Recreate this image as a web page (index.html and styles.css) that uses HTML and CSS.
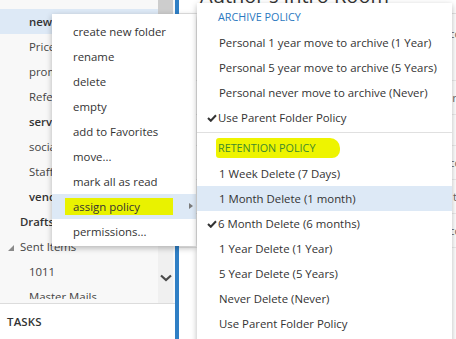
FILE: index.html
```html
<!DOCTYPE html>
<html lang="en">
<head>
    <meta charset="UTF-8">
    <meta name="viewport" content="width=device-width, initial-scale=1.0">
    <title>Mail - Folders</title>
    <link rel="stylesheet" href="styles.css">
</head>
<body>
  <div class="app">
    <aside class="sidebar">
      <div class="folders">
        <ul class="folder-list">
          <li class="folder sub strong selected">newsletters</li>
          <li class="folder sub">Price lists</li>
          <li class="folder sub">promotions</li>
          <li class="folder sub">References</li>
          <li class="folder sub strong">services</li>
          <li class="folder sub">social</li>
          <li class="folder sub">Staff</li>
          <li class="folder sub strong">vendors</li>
          <li class="folder strong">Drafts</li>
          <li class="folder">
            <svg class="twisty" width="6" height="6" viewBox="0 0 6 6"><polygon points="6,0 6,6 0,6" /></svg>
            Sent Items
          </li>
          <li class="folder sub">1011</li>
          <li class="folder sub">Master Mails</li>
        </ul>
        <div class="scrollbar">
          <div class="thumb"></div>
          <svg class="chevron" width="12" height="8" viewBox="0 0 12 8">
            <polyline points="1,1.5 6,6 11,1.5" />
          </svg>
        </div>
      </div>
      <div class="tasks">TASKS</div>
    </aside>

    <div class="splitter"></div>

    <main class="content">
      <h1 class="reading-title">Author's Intro Room</h1>
      <div class="message-row tall">cc</div>
      <div class="message-row">r:</div>
      <div class="message-row short"></div>
      <div class="message-row">cc</div>
      <div class="message-row">t:</div>
      <div class="message-row">cc</div>
    </main>
  </div>

  <!-- folder context menu -->
  <ul class="menu folder-menu">
    <li>create new folder</li>
    <li>rename</li>
    <li>delete</li>
    <li>empty</li>
    <li>add to Favorites</li>
    <li>move...</li>
    <li>mark all as read</li>
    <li class="active has-sub"><span class="marker">assign policy</span></li>
    <li>permissions...</li>
  </ul>

  <!-- policy submenu -->
  <div class="menu policy-menu">
    <div class="policy-title">ARCHIVE POLICY</div>
    <div class="policy-item">Personal 1 year move to archive (1 Year)</div>
    <div class="policy-item">Personal 5 year move to archive (5 Years)</div>
    <div class="policy-item">Personal never move to archive (Never)</div>
    <div class="policy-item checked">
      <svg class="check" width="10" height="8" viewBox="0 0 10 8"><polyline points="1,4 3.8,6.8 9,1.2" /></svg>
      Use Parent Folder Policy
    </div>
    <div class="policy-sep"></div>
    <div class="policy-title retention"><span class="marker">RETENTION POLICY</span></div>
    <div class="policy-item">1 Week Delete (7 Days)</div>
    <div class="policy-item active">1 Month Delete (1 month)</div>
    <div class="policy-item checked">
      <svg class="check" width="10" height="8" viewBox="0 0 10 8"><polyline points="1,4 3.8,6.8 9,1.2" /></svg>
      6 Month Delete (6 months)
    </div>
    <div class="policy-item">1 Year Delete (1 Year)</div>
    <div class="policy-item">5 Year Delete (5 Years)</div>
    <div class="policy-item">Never Delete (Never)</div>
    <div class="policy-item">Use Parent Folder Policy</div>
  </div>
</body>
</html>
```

FILE: styles.css
```css
html, body {
    margin: 0;
    padding: 0;
    background-color: #ffffff;
    font-family: 'Open Sans', 'Noto Sans', sans-serif;
    font-size: 11.4px;
    color: #444444;
}

body {
    width: 456px;
    height: 339px;
    overflow: hidden;
    position: relative;
}

ul {
    list-style: none;
    margin: 0;
    padding: 0;
}

.app {
    display: flex;
    height: 339px;
}

/* Folder pane */
.sidebar {
    width: 175px;
    display: flex;
    flex-direction: column;
    background-color: #ffffff;
}

.folders {
    display: flex;
    height: 303px;
    border-bottom: 1px solid #dcdcdc;
    background-color: #f8f8f8;
}

.folder-list {
    width: 158px;
    height: 299px;
    padding-top: 9px;
    box-sizing: border-box;
    overflow: hidden;
}

.folder {
    height: 25px;
    line-height: 25px;
    padding-left: 20px;
    white-space: nowrap;
    display: flex;
    align-items: center;
}

.folder.sub {
    padding-left: 29px;
}

.folder.strong {
    font-weight: 600;
    color: #333333;
}

.folder.selected {
    background-color: #dde9f6;
}

.twisty {
    fill: #8a8a8a;
    margin-left: -12px;
    margin-right: 6px;
    margin-top: 2px;
}

.scrollbar {
    width: 15px;
    display: flex;
    flex-direction: column;
    align-items: center;
    background-color: #f0f0f0;
}

.thumb {
    width: 15px;
    height: 14px;
    background-color: #cdcdcd;
}

.chevron {
    margin-top: auto;
    margin-bottom: 21px;
    fill: none;
    stroke: #4a4a4a;
    stroke-width: 2.2;
}

.tasks {
    padding: 10px 7px;
    font-weight: 600;
    color: #333333;
    letter-spacing: 0.2px;
}

.splitter {
    width: 4px;
    background-color: #2f7fc5;
}

/* Reading pane behind the menus */
.content {
    flex: 1;
    overflow: hidden;
}

.reading-title {
    margin: -18px 0 0 0;
    padding-left: 21px;
    height: 31px;
    font-size: 20px;
    font-weight: 400;
    color: #333333;
    border-bottom: 1px solid #e4e4e4;
}

.message-row {
    height: 33px;
    line-height: 33px;
    text-align: right;
    margin-right: -4px;
    color: #666666;
    border-bottom: 1px solid #ececec;
}

.message-row.tall {
    height: 66px;
    line-height: 40px;
}

.message-row.short {
    height: 30px;
}

/* Menus */
.menu {
    position: absolute;
    background-color: #ffffff;
    box-shadow: 0 2px 6px rgba(0, 0, 0, 0.28);
    color: #333333;
}

.folder-menu {
    left: 52px;
    top: 14px;
    width: 144px;
    padding: 5px 0 2px 0;
}

.folder-menu li {
    height: 25px;
    line-height: 25px;
    padding-left: 21px;
    position: relative;
}

.folder-menu li.active {
    background-color: #dde9f6;
}

.folder-menu .marker {
    display: inline-block;
    line-height: 17px;
    padding: 0 33px 0 8px;
    margin-left: -8px;
    background-color: #e9f200;
}

.has-sub::after {
    content: "";
    position: absolute;
    right: 3px;
    top: 9px;
    border-left: 4px solid #7a7a7a;
    border-top: 3.5px solid transparent;
    border-bottom: 3.5px solid transparent;
}

.policy-menu {
    left: 197px;
    top: 3px;
    width: 255px;
    height: 345px;
    padding-top: 1px;
    box-sizing: border-box;
}

.policy-title {
    height: 26px;
    line-height: 26px;
    padding-left: 21px;
    font-size: 10.8px;
    color: #2a78c0;
}

.policy-title.retention {
    color: #3f8a2c;
}

.policy-title .marker {
    display: inline-block;
    line-height: 20px;
    padding: 0 25px 0 2px;
    margin-left: -2px;
    background-color: #eef400;
    border-radius: 3px 10px 8px 3px;
}

.policy-item {
    height: 25px;
    line-height: 25px;
    padding-left: 22px;
    white-space: nowrap;
    position: relative;
}

.policy-item.active {
    background-color: #dde9f6;
}

.policy-item.checked {
    padding-left: 21px;
}

.check {
    position: absolute;
    left: 10px;
    top: 9px;
    fill: none;
    stroke: #333333;
    stroke-width: 2;
}

.policy-sep {
    height: 1px;
    margin: 2px 0 2px 0;
    background-color: #e0e0e0;
}
```
